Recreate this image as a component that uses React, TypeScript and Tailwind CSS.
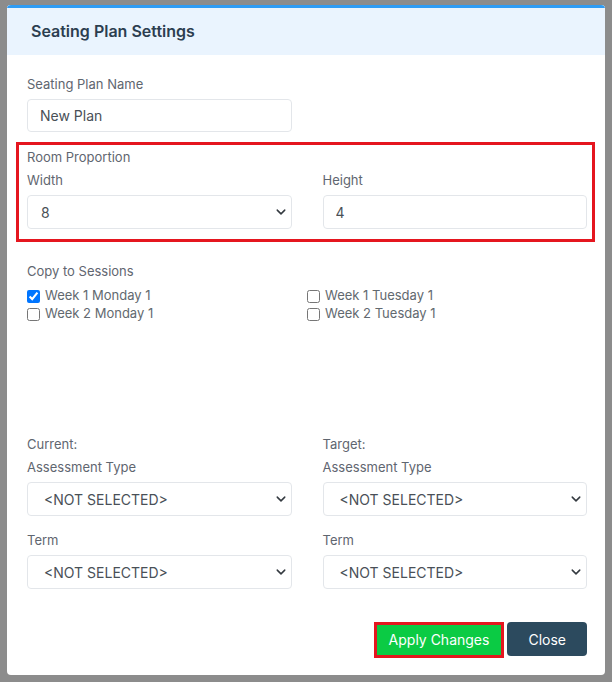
import { useState } from "react";

const sessions = [
  { label: "Week 1 Monday 1", checked: true },
  { label: "Week 1 Tuesday 1", checked: false },
  { label: "Week 2 Monday 1", checked: false },
  { label: "Week 2 Tuesday 1", checked: false },
];

function Chevron() {
  return (
    <svg
      className="pointer-events-none absolute right-[6px] top-1/2 -translate-y-1/2"
      width="10"
      height="10"
      viewBox="0 0 16 16"
    >
      <path d="M2 5l6 6 6-6" fill="none" stroke="#343a40" strokeWidth="2.4" strokeLinecap="round" strokeLinejoin="round" />
    </svg>
  );
}

function Select({ value, pad = "pl-[13px]" }: { value: string; pad?: string }) {
  return (
    <div className="relative">
      <select
        defaultValue={value}
        className={`h-[34px] w-full appearance-none rounded border border-[#e3e6ea] bg-white ${pad} text-[14px] text-[#495057] outline-none`}
      >
        <option>{value}</option>
      </select>
      <Chevron />
    </div>
  );
}

function Label({ children, className = "" }: { children: React.ReactNode; className?: string }) {
  return <div className={`text-[13px] leading-[20px] text-[#5f6670] ${className}`}>{children}</div>;
}

export default function App() {
  const [checks, setChecks] = useState(sessions.map((s) => s.checked));

  return (
    <div
      className="min-h-[682px] bg-[#8c8c8c] pl-[7px] pr-[7px] pt-[5px]"
      style={{ fontFamily: "Inter, 'Noto Sans', sans-serif" }}
    >
      <div className="w-[598px] overflow-hidden rounded-[4px] bg-white">
        {/* Header */}
        <div className="h-[50px] border-t-[3px] border-[#2f9cf4] bg-[#eaf4fe] pl-6 pt-[12px]">
          <h1 className="text-[16px] font-semibold leading-[22px] text-[#2c3e50]">Seating Plan Settings</h1>
        </div>

        <div className="pb-[17px] pl-5 pr-[18px] pt-[19px]">
          <Label>Seating Plan Name</Label>
          <div className="mt-[5px] grid grid-cols-2 gap-[31px]">
            <input
              defaultValue="New Plan"
              className="h-[33px] rounded border border-[#e3e6ea] pl-[12px] text-[14px] text-[#495057] outline-none"
            />
          </div>

          {/* Room proportion */}
          <div className="-ml-[11px] -mr-[8px] mt-[10px] border-[3px] border-[#e5161f] pb-[10px] pl-[8px] pr-[5px] pt-[2px]">
            <Label>Room Proportion</Label>
            <div className="mt-[3px] grid grid-cols-2 gap-[31px]">
              <div>
                <Label>Width</Label>
                <div className="mt-[5px]">
                  <Select value="8" />
                </div>
              </div>
              <div>
                <Label>Height</Label>
                <input
                  defaultValue="4"
                  className="mt-[5px] h-[34px] w-full rounded border border-[#e3e6ea] pl-[12px] text-[14px] text-[#495057] outline-none"
                />
              </div>
            </div>
          </div>

          {/* Copy to sessions */}
          <Label className="mt-[19px]">Copy to Sessions</Label>
          <div className="mt-[6px] grid grid-cols-[280px_1fr]">
            {sessions.map((s, i) => (
              <label key={s.label} className="flex h-[18px] items-center text-[13px] text-[#62696f]">
                <input
                  type="checkbox"
                  checked={checks[i]}
                  onChange={() => setChecks(checks.map((c, j) => (j === i ? !c : c)))}
                  className="m-0 mr-[5px] h-[13px] w-[13px]"
                />
                {s.label}
              </label>
            ))}
          </div>

          {/* Current / Target */}
          <div className="mt-[111px] grid grid-cols-2 gap-[31px]">
            {["Current:", "Target:"].map((t) => (
              <div key={t}>
                <Label>{t}</Label>
                <Label className="mt-[3px]">Assessment Type</Label>
                <div className="mt-[5px]">
                  <Select value="<NOT SELECTED>" pad="pl-[16px]" />
                </div>
                <Label className="mt-[14px]">Term</Label>
                <div className="mt-[5px]">
                  <Select value="<NOT SELECTED>" pad="pl-[16px]" />
                </div>
              </div>
            ))}
          </div>

          {/* Buttons */}
          <div className="mt-[33px] flex justify-end gap-[3px]">
            <div className="border-[3px] border-[#e5161f]">
              <button className="h-[30px] bg-[#0bcb44] px-[12px] text-[14px] leading-[28px] text-white">Apply Changes</button>
            </div>
            <button className="h-[34px] rounded-[4px] bg-[#2c4a5e] px-[21px] text-[14px] text-white">Close</button>
          </div>
        </div>
      </div>
    </div>
  );
}
